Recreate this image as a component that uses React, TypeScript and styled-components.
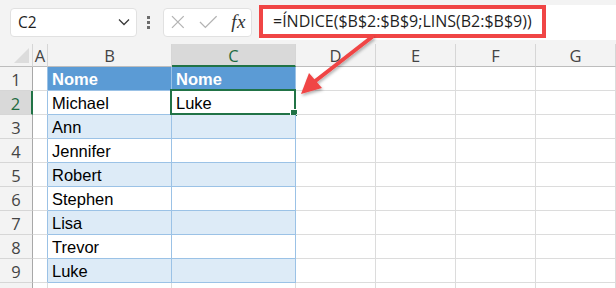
import React from "react";
import styled, { createGlobalStyle, css } from "styled-components";

const GlobalStyle = createGlobalStyle`
  html, body {
    margin: 0;
    padding: 0;
    background: #ffffff;
  }
  * {
    box-sizing: border-box;
  }
`;

const COLS = ["A", "B", "C", "D", "E", "F", "G"];
const NAMES = ["Michael", "Ann", "Jennifer", "Robert", "Stephen", "Lisa", "Trevor", "Luke"];

const Page = styled.div`
  position: relative;
  width: 616px;
  height: 288px;
  overflow: hidden;
  background: #ffffff;
  font-family: "Liberation Sans", Arial, sans-serif;
`;

const Toolbar = styled.div`
  display: flex;
  align-items: center;
  height: 44px;
  padding: 0 0 0 10px;
  background: #f3f3f3;
`;

const NameBox = styled.div`
  display: flex;
  align-items: center;
  justify-content: space-between;
  width: 127px;
  height: 29px;
  padding: 0 6px 0 7px;
  background: #ffffff;
  border: 1px solid #e1e1e1;
  border-radius: 4px;
  font-family: "Open Sans", "Noto Sans", sans-serif;
  font-size: 15.5px;
  color: #1f1f1f;
`;

const Dots = styled.div`
  display: flex;
  flex-direction: column;
  gap: 2px;
  margin: 0 13px 0 10px;
  span {
    display: block;
    width: 3px;
    height: 3px;
    background: #6b6b6b;
  }
`;

const FxBox = styled.div`
  display: flex;
  align-items: center;
  gap: 14px;
  width: 89px;
  height: 29px;
  padding: 0 5px 0 7px;
  background: #ffffff;
  border: 1px solid #e1e1e1;
  border-radius: 4px;
`;

const Fx = styled.span`
  margin-left: auto;
  font-family: "Liberation Serif", "Times New Roman", serif;
  font-style: italic;
  font-size: 19px;
  color: #333333;
  letter-spacing: 0.5px;
`;

const FormulaBar = styled.div`
  flex: 1;
  display: flex;
  align-items: center;
  height: 35px;
  margin-left: 7px;
  background: #ffffff;
`;

const Highlight = styled.div`
  display: flex;
  align-items: center;
  width: 287px;
  height: 33px;
  margin-top: -2px;
  padding-left: 10px;
  border: 4px solid #f04545;
  font-family: "Open Sans", "Noto Sans", sans-serif;
  font-size: 16px;
  color: #1f1f1f;
  white-space: nowrap;
`;

const Sheet = styled.div`
  display: grid;
  grid-template-columns: 33px 15px 124px 124px 80px 80px 80px 80px;
  grid-template-rows: 23px repeat(10, 24px);
`;

const Corner = styled.div`
  position: relative;
  background: #f3f3f3;
  border-right: 1px solid #d6d6d6;
  border-bottom: 1px solid #bdbdbd;
  &::after {
    content: "";
    position: absolute;
    right: 3px;
    bottom: 3px;
    border-style: solid;
    border-width: 0 0 15px 15px;
    border-color: transparent transparent #dcdcdc transparent;
  }
`;

const ColHead = styled.div<{ $active?: boolean }>`
  display: flex;
  align-items: center;
  justify-content: center;
  padding-top: 1px;
  background: ${(p) => (p.$active ? "#d9d9d9" : "#f3f3f3")};
  border-right: 1px solid #d6d6d6;
  border-bottom: ${(p) => (p.$active ? "2px solid #217346" : "1px solid #bdbdbd")};
  font-family: "Open Sans", "Noto Sans", sans-serif;
  font-size: 16.5px;
  color: ${(p) => (p.$active ? "#1e6b41" : "#444444")};
`;

const RowHead = styled.div<{ $active?: boolean }>`
  display: flex;
  align-items: center;
  justify-content: center;
  padding-top: 1px;
  background: ${(p) => (p.$active ? "#d9d9d9" : "#f3f3f3")};
  border-right: ${(p) => (p.$active ? "2px solid #217346" : "1px solid #a8a8a8")};
  border-bottom: 1px solid #d6d6d6;
  font-family: "Open Sans", "Noto Sans", sans-serif;
  font-size: 16.5px;
  color: ${(p) => (p.$active ? "#1e6b41" : "#444444")};
`;

type Kind = "plain" | "head" | "band" | "row";

const Cell = styled.div<{ $kind: Kind; $edge?: boolean }>`
  position: relative;
  display: flex;
  align-items: center;
  padding: 2px 0 0 4px;
  font-size: 16.5px;
  color: #000000;
  white-space: nowrap;
  border-right: 1px solid #dcdcdc;
  border-bottom: 1px solid #dcdcdc;
  ${(p) =>
    p.$kind !== "plain" &&
    css`
      border-right-color: #9bc2e6;
      border-bottom-color: #9bc2e6;
    `}
  ${(p) =>
    p.$edge &&
    css`
      border-right-color: #9bc2e6;
    `}
  ${(p) =>
    p.$kind === "head" &&
    css`
      background: #5b9bd5;
      color: #ffffff;
      font-weight: bold;
    `}
  ${(p) =>
    p.$kind === "band" &&
    css`
      background: #ddebf7;
    `}
`;

const Selected = styled.div`
  position: absolute;
  inset: -2px -1px -1px -2px;
  border: 2px solid #217346;
  pointer-events: none;
  &::after {
    content: "";
    position: absolute;
    right: -4px;
    bottom: -4px;
    width: 6px;
    height: 6px;
    background: #217346;
    border: 1px solid #ffffff;
  }
`;

const Arrow = styled.svg`
  position: absolute;
  left: 290px;
  top: 30px;
  overflow: visible;
`;

function kindFor(row: number, col: number): Kind {
  if (col < 1 || col > 2 || row > 9) return "plain";
  if (row === 1) return "head";
  return row % 2 === 1 ? "band" : "row";
}

function cellText(row: number, col: number): string {
  if (row === 1 && (col === 1 || col === 2)) return "Nome";
  if (col === 1 && row >= 2 && row <= 9) return NAMES[row - 2];
  if (col === 2 && row === 2) return "Luke";
  return "";
}

export default function App() {
  const rows = Array.from({ length: 10 }, (_, i) => i + 1);
  return (
    <Page>
      <GlobalStyle />
      <Toolbar>
        <NameBox>
          <span>C2</span>
          <svg width="12" height="8" viewBox="0 0 12 8">
            <path d="M1 1.5 L6 6.5 L11 1.5" fill="none" stroke="#3a3a3a" strokeWidth="1.3" />
          </svg>
        </NameBox>
        <Dots>
          <span />
          <span />
          <span />
        </Dots>
        <FxBox>
          <svg width="14" height="14" viewBox="0 0 14 14">
            <path d="M1 1 L13 13 M13 1 L1 13" stroke="#b3b3b3" strokeWidth="1.3" fill="none" />
          </svg>
          <svg width="19" height="14" viewBox="0 0 19 14">
            <path d="M1 7 L6.5 12.5 L18 1" stroke="#b3b3b3" strokeWidth="1.3" fill="none" />
          </svg>
          <Fx>fx</Fx>
        </FxBox>
        <FormulaBar>
          <Highlight>=ÍNDICE($B$2:$B$9;LINS(B2:$B$9))</Highlight>
        </FormulaBar>
      </Toolbar>
      <Sheet>
        <Corner />
        {COLS.map((c) => (
          <ColHead key={c} $active={c === "C"}>
            {c}
          </ColHead>
        ))}
        {rows.map((r) => (
          <React.Fragment key={r}>
            {/* row 10 is only a sliver at the bottom edge, its number is hidden */}
            <RowHead $active={r === 2}>{r < 10 ? r : ""}</RowHead>
            {Array.from({ length: 7 }, (_, c) => (
              <Cell key={c} $kind={kindFor(r, c)} $edge={c === 0 && r <= 9}>
                {cellText(r, c)}
                {r === 2 && c === 2 && <Selected />}
              </Cell>
            ))}
          </React.Fragment>
        ))}
      </Sheet>
      <Arrow width="90" height="70" viewBox="0 0 90 70">
        <defs>
          <filter id="shadow" x="-20%" y="-20%" width="140%" height="140%">
            <feDropShadow dx="1" dy="2" stdDeviation="1.5" floodColor="#000" floodOpacity="0.3" />
          </filter>
        </defs>
        <g filter="url(#shadow)">
          <path d="M82 7 L24 52" stroke="#f04545" strokeWidth="4" strokeLinecap="round" fill="none" />
          <path d="M11 64 L19 43 L32 58 Z" fill="#f04545" />
        </g>
      </Arrow>
    </Page>
  );
}
